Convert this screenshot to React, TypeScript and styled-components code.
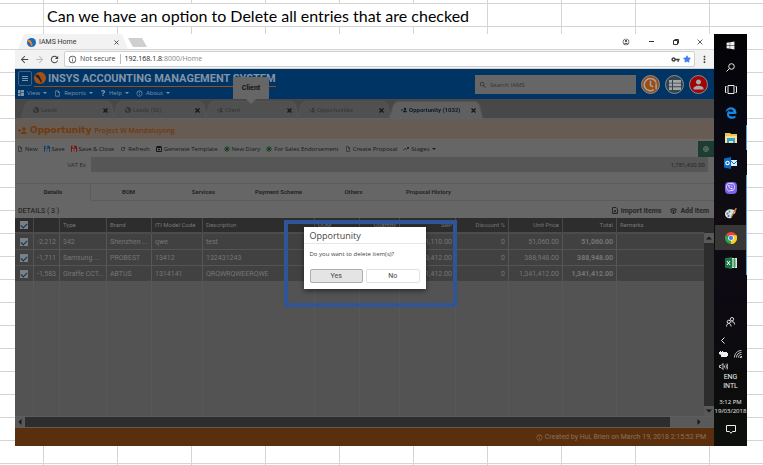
import React from "react";
import styled, { createGlobalStyle, css } from "styled-components";
import { FaWindows, FaViber, FaStar, FaQuestion } from "react-icons/fa";
import { FaEdgeLegacy } from "react-icons/fa6";
import {
  MdArrowBack,
  MdArrowForward,
  MdRefresh,
  MdInfoOutline,
  MdMoreVert,
  MdVpnKey,
  MdPerson,
  MdOutlineInsertDriveFile,
  MdOutlineAccountCircle,
  MdSearch,
} from "react-icons/md";

const ui = `"Open Sans", "Noto Sans", sans-serif`;
const narrow = `Roboto, "Open Sans", sans-serif`;

const GlobalStyle = createGlobalStyle`
  * { box-sizing: border-box; }
  body { margin: 0; font-family: ${ui}; font-size: 7px; line-height: 10px; }
  button, input { font: inherit; color: inherit; }
  button { background: none; border: 0; padding: 0; white-space: nowrap; }
  svg { display: block; flex: none; }
  h1, h2, p { margin: 0; }
`;

/* ---------- worksheet ---------- */

const Sheet = styled.main`
  min-height: 100vh;
  display: flex;
  flex-direction: column;
  background-color: #fff;
  background-image:
    repeating-linear-gradient(to right, transparent 0 73px, #d4d4d4 73px 74px),
    repeating-linear-gradient(to bottom, transparent 0 22px, #d4d4d4 22px 23px);
  background-position: -30px 0, 0 -19px;
  background-size: calc(100% + 30px) 100%, 100% calc(100% + 19px);
`;

const Note = styled.p`
  align-self: flex-start;
  width: 443px;
  height: 22px;
  margin: 4px 0 8px 44px;
  padding-left: 3px;
  background: #fff;
  color: #000;
  font: 16px/23px Lato, "Open Sans", sans-serif;
  white-space: nowrap;
`;

const Desktop = styled.section`
  flex: 1;
  display: flex;
  margin: 0 16px 19px 15px;
`;

/* ---------- browser ---------- */

const Browser = styled.div`
  flex: 1;
  min-width: 0;
  display: flex;
  flex-direction: column;
  background: #fff;
`;

const TitleBar = styled.header`
  display: flex;
  height: 15px;
  padding-left: 3px;
  color: #333;
  font-family: ${narrow};
`;

const BrowserTab = styled.div`
  display: flex;
  align-items: center;
  width: 110px;
  padding: 1px 9px 0 9px;
  gap: 3px;
  background: #f2f2f2;
  clip-path: polygon(0 100%, 6px 0, 104px 0, 100% 100%);
  span { flex: 1; }
`;

const NewTab = styled.button`
  width: 19px;
  height: 9px;
  margin-top: 4px;
  background: #cfcfcf;
  clip-path: polygon(0 0, 14px 0, 100% 100%, 5px 100%);
`;

const WindowButtons = styled.div`
  margin-left: auto;
  display: flex;
  align-items: center;
  gap: 18px;
  padding-right: 11px;
`;

const NavBar = styled.nav`
  display: flex;
  align-items: center;
  height: 20px;
  padding: 0 4px 0 4px;
  gap: 4px;
  background: #f2f2f2;
  border-top: 1px solid #d8d8d8;
  border-bottom: 1px solid #d0d0d0;
  color: #444;
`;

const Address = styled.div`
  flex: 1;
  display: flex;
  align-items: center;
  height: 16px;
  padding: 0 3px;
  gap: 3px;
  background: #fff;
  border: 1px solid #d0d0d0;
  border-radius: 2px;
`;

const Security = styled.span`
  padding-right: 4px;
  border-right: 1px solid #bbb;
  margin-right: 1px;
`;

const Url = styled.span`
  flex: 1;
  color: #888;
  b { font-weight: 400; color: #222; }
`;

/* ---------- application ---------- */

const Page = styled.div`
  position: relative;
  flex: 1;
  display: flex;
  flex-direction: column;
  background: #666;
  color: #262626;
`;

const AppHeader = styled.header`
  display: flex;
  height: 30px;
  padding: 1px 6px 0 3px;
  background: #003465;
  color: #8195a8;
`;

const Branding = styled.div`
  display: flex;
  flex-direction: column;
`;

const BrandRow = styled.div`
  display: flex;
  align-items: center;
  gap: 2px;
  height: 17px;
`;

const MenuButton = styled.button`
  display: grid;
  place-items: center;
  width: 14px;
  height: 15px;
  border: 1px solid #41607d;
  border-radius: 2px;
`;

const Brand = styled.h1`
  display: flex;
  align-items: center;
  height: 17px;
  gap: 2px;
  border-bottom: 1px solid #a04c10;
  font-family: ${narrow};
  font-size: 11px;
  font-weight: 700;
  line-height: 15px;
  white-space: nowrap;
`;

const ToolButton = styled.button`
  display: flex;
  align-items: center;
  gap: 2px;
`;

const MenuRow = styled.nav`
  display: flex;
  align-items: center;
  gap: 7px;
  height: 12px;
  font-size: 6px;
  ${ToolButton} { gap: 3px; }
`;

const Caret = styled.i`
  border: 2px solid transparent;
  border-top-color: currentColor;
  border-bottom: 0;
`;

const HeaderTools = styled.div`
  margin-left: auto;
  display: flex;
  align-items: center;
  gap: 5px;
`;

const SearchBox = styled.label`
  display: flex;
  align-items: center;
  gap: 3px;
  width: 161px;
  height: 19px;
  padding: 0 4px;
  background: #666;
  color: #2c2c2c;
  font-size: 6px;
  input { flex: 1; min-width: 0; background: none; border: 0; padding: 0; }
  input::placeholder { color: #333; opacity: 1; }
`;

const RoundButton = styled.button<{ $fill: string }>`
  display: grid;
  place-items: center;
  width: 19px;
  height: 19px;
  border-radius: 50%;
  border: 1px solid #8c8c8c;
  background: ${(p) => p.$fill};
  color: #a9a9a9;
`;

const TabStrip = styled.div`
  display: flex;
  height: 21px;
  padding: 3px 0 0 7px;
  background: #484848;
  border-bottom: 2px solid #5d5d5d;
`;

const TabShell = styled.div`
  filter: drop-shadow(0 0 1px #6a6a6a);
  width: 92px;
`;

const PageTab = styled.div<{ $active?: boolean }>`
  display: flex;
  align-items: center;
  gap: 2px;
  height: 16px;
  padding: 0 6px 0 11px;
  clip-path: polygon(0 100%, 4px 3px, 7px 0, 86px 0, 89px 3px, 100% 100%);
  background: ${(p) => (p.$active ? "#606060" : "#505050")};
  color: ${(p) => (p.$active ? "#0d1b2a" : "#373737")};
  font-family: ${narrow};
  font-size: 6px;
  font-weight: ${(p) => (p.$active ? 700 : 400)};
  span { flex: 1; white-space: nowrap; }
  svg:last-child { color: #161616; }
`;

const TitleBand = styled.div`
  display: flex;
  align-items: center;
  gap: 3px;
  height: 20px;
  padding: 1px 3px 0;
  background: #665c54;
  border-bottom: 1px solid #6f6760;
  color: #70390d;
  h2 { font-size: 9px; line-height: 14px; font-family: "DejaVu Sans", sans-serif; }
  b { font-size: 7px; font-weight: 600; padding-top: 2px; }
`;

const Actions = styled.div`
  display: flex;
  align-items: center;
  gap: 6px;
  height: 17px;
  padding-left: 2px;
  color: #181818;
  font-size: 6px;
`;

const EyeButton = styled.button`
  display: grid;
  place-items: center;
  width: 16px;
  height: 16px;
  margin-left: auto;
  background: #1d3d33;
  color: #718078;
`;

const Field = styled.label`
  display: flex;
  align-items: center;
  gap: 5px;
  padding-right: 6px;
  font-size: 6px;
  span { width: 71px; text-align: right; }
  input {
    flex: 1;
    min-width: 0;
    height: 15px;
    border: 0;
    padding: 0 3px;
    background: #565656;
    text-align: right;
    font-family: ${narrow};
  }
`;

const SectionTabs = styled.div`
  display: flex;
  height: 18px;
  margin-top: 11px;
  padding-left: 1px;
  border-top: 1px solid #5c5c5c;
  font-family: ${narrow};
`;

const SectionTab = styled.button<{ $active?: boolean }>`
  width: 75px;
  font-size: 6px;
  font-weight: 700;
  border-bottom: 1px solid #5c5c5c;
  ${(p) => p.$active && css`border-bottom-color: #666; border-right: 1px solid #5c5c5c; color: #222;`}
`;

const TabRest = styled.div`
  flex: 1;
  border-bottom: 1px solid #5c5c5c;
`;

const DetailsBar = styled.div`
  display: flex;
  align-items: center;
  gap: 9px;
  height: 17px;
  padding: 2px 5px 0 3px;
  font-family: ${narrow};
  font-weight: 500;
  > :first-child { margin-right: auto; }
`;

const StrongTool = styled(ToolButton)`
  font-weight: 700;
  gap: 3px;
`;

const GridArea = styled.div`
  flex: 1;
  display: grid;
  grid-template-columns: minmax(0, 1fr) 10px;
  background: #535353;
`;

const GridTable = styled.table`
  width: 100%;
  height: 100%;
  table-layout: fixed;
  border-collapse: separate;
  border-spacing: 0;
  color: #767676;
  font-family: ${narrow};
`;

const Cell = styled.td<{ $right?: boolean; $bold?: boolean }>`
  height: 16px;
  padding: 0 3px;
  overflow: hidden;
  white-space: nowrap;
  background: #414141;
  border-right: 1px solid #565656;
  border-bottom: 1px solid #545454;
  text-align: ${(p) => (p.$right ? "right" : "left")};
  font-weight: ${(p) => (p.$bold ? 700 : 400)};
  &:last-child { border-right: 0; }
`;

const HeadCell = styled(Cell)`
  background: #2d2d2d;
  border-right-color: #484848;
  border-bottom: 2px solid #4c4c4c;
  font-size: 6px;
`;

const BlankCell = styled.td`
  border-right: 1px solid #585858;
  &:last-child { border-right: 0; }
`;

const Check = styled.input`
  appearance: none;
  display: grid;
  place-items: center;
  width: 8px;
  height: 8px;
  margin: 0 auto;
  background: #7b8085;
  &:checked::after {
    content: "";
    width: 3px;
    height: 5px;
    border: solid #10304f;
    border-width: 0 1px 1px 0;
    transform: rotate(45deg);
  }
`;

const VScroll = styled.div`
  display: flex;
  flex-direction: column;
  border-top: 15px solid #2d2d2d;
  background: #2d2d2d;
  justify-content: space-between;
`;

const HScroll = styled.div`
  display: flex;
  justify-content: space-between;
  height: 12px;
  background: #2d2d2d;
  border: solid #5d5d5d;
  border-width: 1px 0;
`;

const ScrollEnd = styled.button<{ $wide?: boolean }>`
  display: flex;
  align-items: center;
  justify-content: ${(p) => (p.$wide ? "flex-end" : "center")};
  width: ${(p) => (p.$wide ? "44px" : "10px")};
  padding-right: ${(p) => (p.$wide ? "12px" : "0")};
  height: 10px;
  background: #595959;
  color: #161616;
`;

const StatusBar = styled.footer`
  display: flex;
  align-items: center;
  justify-content: flex-end;
  gap: 2px;
  height: 18px;
  padding-right: 8px;
  background: #5a2f0e;
  color: #8c6f58;
  font-family: ${narrow};
`;

/* ---------- overlays ---------- */

const Tooltip = styled.div`
  position: absolute;
  top: 8px;
  left: 218px;
  width: 36px;
  height: 22px;
  display: grid;
  place-items: center;
  background: #666;
  color: #151515;
  font-family: ${narrow};
  font-weight: 700;
  &::after {
    content: "";
    position: absolute;
    top: 100%;
    left: 13px;
    border: 5px solid transparent;
    border-top-color: #666;
    border-bottom: 0;
  }
`;

const DialogLayer = styled.div`
  position: absolute;
  inset: 0;
  display: grid;
  place-items: center;
`;

const Dialog = styled.div`
  position: relative;
  width: 122px;
  padding-bottom: 6px;
  background: #fff;
  color: #444;
  font-family: ${narrow};
  box-shadow: 0 2px 5px rgba(0, 0, 0, 0.5);
  h2 {
    height: 17px;
    padding-left: 6px;
    border-bottom: 1px solid #e6e6e6;
    font-family: ${ui};
    font-size: 9px;
    font-weight: 400;
    line-height: 18px;
  }
  p { padding: 5px 6px 10px; font-size: 6px; font-family: ${ui}; }
`;

const DialogButtons = styled.div`
  display: grid;
  grid-template-columns: 1fr 1fr;
  gap: 3px;
  padding: 0 6px;
`;

const DialogButton = styled.button<{ $primary?: boolean }>`
  height: 14px;
  border: 1px solid ${(p) => (p.$primary ? "#adadad" : "#e2e2e2")};
  border-radius: 2px;
  background: ${(p) => (p.$primary ? "#e4e4e4" : "#fff")};
`;

const Highlight = styled.div`
  position: absolute;
  inset: -7px -31px -18px -20px;
  border: 4px solid #2f5597;
  pointer-events: none;
`;

/* ---------- taskbar ---------- */

const Taskbar = styled.aside`
  display: flex;
  flex-direction: column;
  width: 33px;
  background: linear-gradient(#030305, #080812 20%, #100c12 45%, #0d0912 65%, #0b0c0b 85%, #0d100d);
  color: #eee;
`;

const TaskItem = styled.button<{ $running?: boolean; $active?: boolean; $small?: boolean }>`
  display: grid;
  place-items: center;
  height: ${(p) => (p.$small ? "22px" : "25px")};
  border-left: 1px solid transparent;
  border-right: 1px solid ${(p) => (p.$running ? "#5aa5e6" : "transparent")};
  background: ${(p) => (p.$active ? "#393636" : "none")};
  background-clip: padding-box;
`;

const Tray = styled.div`
  margin-top: auto;
  display: flex;
  flex-direction: column;
  align-items: center;
  padding-bottom: 3px;
  font-family: ${narrow};
  line-height: 9px;
  white-space: nowrap;
`;

const TrayRow = styled.div<{ $h: number; $start?: boolean }>`
  display: flex;
  align-items: center;
  align-self: stretch;
  justify-content: ${(p) => (p.$start ? "flex-start" : "center")};
  gap: 6px;
  padding-left: ${(p) => (p.$start ? "5px" : "0")};
  height: ${(p) => p.$h}px;
`;

const Clock = styled.time`
  display: grid;
  justify-items: center;
  margin-top: 7px;
  font-size: 6px;
  font-family: ${ui};
`;

/* ---------- drawings ---------- */

const Globe = ({ size, dim }: { size: number; dim?: boolean }) => (
  <svg width={size} height={size} viewBox="0 0 16 16">
    <circle cx="8" cy="8" r="8" fill={dim ? "#353535" : "#1769b8"} />
    <path d="M1 4c2-2 4-1 6 1l2 4c1 2 1 4 0 6-3-1-2-4-4-6S1 7 1 4z" fill={dim ? "#505050" : "#e98330"} />
  </svg>
);

const BrandMark = () => (
  <svg width="12" height="12" viewBox="0 0 16 16">
    <circle cx="8" cy="8" r="8" fill="#a9500f" />
    <path d="M2 4c1-1 3-1 5 1l2 4c1 2 2 3 1 5-2 0-2-3-4-5S2 7 2 4z" fill="#13283d" />
  </svg>
);

const PersonAdd = ({ size }: { size: number }) => (
  <svg width={size} height={size} viewBox="0 0 18 16" fill="currentColor">
    <circle cx="12" cy="5" r="3.600" />
    <path d="M5.500 15c0-7 12.500-7 12.500 0zM0 7h6v2H0zM2 5h2v6H2z" />
  </svg>
);

const Cross = ({ size = 5, w = 1.5 }: { size?: number; w?: number }) => (
  <svg width={size} height={size} viewBox="0 0 6 6" stroke="currentColor" strokeWidth={w}>
    <path d="M.6.6l4.8 4.8M5.400.6L.6 5.400" />
  </svg>
);

const Arrow = ({ d }: { d: string }) => (
  <svg width="6" height="6" viewBox="0 0 6 6" fill="currentColor"><path d={d} /></svg>
);

const Asterisk = () => (
  <svg width="6" height="6" viewBox="0 0 8 8" stroke="#0c3f1b" strokeWidth="1.200">
    <path d="M4 0v8M0 4h8M1.200 1.200l5.600 5.600M6.800 1.200L1.200 6.800" />
  </svg>
);

const Disk = ({ c }: { c: string }) => (
  <svg width="6" height="7" viewBox="0 0 12 13">
    <path d="M0 1h10l2 2v10H0z" fill={c} />
    <path d="M3 1h5v4H3zM2 7h8v6H2z" fill="#777" />
    <path d="M6 2h1v2H6zM3.500 9h5M3.500 11h5" stroke={c} />
  </svg>
);

const Box = () => (
  <svg width="6" height="6" viewBox="0 0 12 12" fill="none" stroke="currentColor" strokeWidth="2">
    <path d="M1 3h10v8H1zM1 1h10" /><path d="M4 7h4M6 5v4" />
  </svg>
);

const Trend = () => (
  <svg width="6" height="6" viewBox="0 0 12 12" fill="none" stroke="currentColor" strokeWidth="1.500">
    <path d="M0 9l4-4 3 2 4-4M8 3h3v3" />
  </svg>
);

const ImportMark = () => (
  <svg width="6" height="7" viewBox="0 0 12 14" fill="none" stroke="currentColor" strokeWidth="2">
    <path d="M1 1h7l3 3v9H1zM4 6l4 5M8 6l-4 5" />
  </svg>
);

const AddMark = () => (
  <svg width="7" height="6" viewBox="0 0 14 12" fill="none" stroke="currentColor" strokeWidth="2">
    <path d="M1 3l6-2 6 2-6 2zM2 5l1 4 4 2 4-2 1-4M7 5v6" />
  </svg>
);

const Tiles = () => (
  <svg width="6" height="6" viewBox="0 0 12 12" fill="currentColor">
    <path d="M0 0h5v7H0zM6 0h6v4H6zM0 8h5v4H0zM6 5h6v7H6z" />
  </svg>
);

const ClockMark = () => (
  <svg width="15" height="15" viewBox="0 0 16 16" fill="none" stroke="#a9a29c" strokeWidth="1.600">
    <path d="M11.500 13.500A6.500 6.500 0 1 1 14 6M8 4v5l3 1.500M14 7v6" />
  </svg>
);

const ListMark = () => (
  <svg width="12" height="10" viewBox="0 0 12 10" fill="#a5a5a5">
    <path d="M0 0h3v2.700H0zM4 0h8v2.700H4zM0 3.600h3v2.700H0zM4 3.600h8v2.700H4zM0 7.200h3V10H0zM4 7.200h8V10H4z" />
  </svg>
);

const TaskView = () => (
  <svg width="12" height="9" viewBox="0 0 12 9" fill="none" stroke="currentColor">
    <path d="M3 .5h6v8H3zM1.500 1.500h-1v6h1M10.500 1.500h1v6h-1" />
  </svg>
);

const Folder = () => (
  <svg width="12" height="10" viewBox="0 0 12 10">
    <path d="M0 0h5l1 1h6v9H0z" fill="#e9c35a" />
    <path d="M0 3h12v7H0z" fill="#fbe08b" />
    <path d="M2 5h8v5H8V8H4v2H2z" fill="#2ea3e0" />
  </svg>
);

const Outlook = () => (
  <svg width="13" height="12" viewBox="0 0 13 12">
    <path d="M6 3h7v6H6z" fill="#dcecf9" />
    <path d="M7 4l3 3 3-3" fill="none" stroke="#0f6fc4" />
    <path d="M0 1.500L7 0v12L0 10.500z" fill="#0a6cc4" />
    <circle cx="3.500" cy="6" r="1.700" fill="none" stroke="#fff" strokeWidth="1.100" />
  </svg>
);

const ViberBadge = styled.span`
  display: grid;
  place-items: center;
  width: 12px;
  height: 12px;
  border-radius: 4px;
  background: #7d62e8;
  color: #f3f0ff;
`;

const Palette = () => (
  <svg width="13" height="12" viewBox="0 0 13 12">
    <path d="M1 7c0-4 5-6 9-4 3 2 1 4-1 4-2 1 0 3-2 4-3 1-6-1-6-4z" fill="#cfe2ef" />
    <circle cx="3.500" cy="6.500" r="1" fill="#d8442f" />
    <circle cx="5.500" cy="4.500" r="1" fill="#3e9f44" />
    <circle cx="4.500" cy="9" r="1" fill="#2767c8" />
    <path d="M6.500 10l5-9 1.500.5L8 10z" fill="#e0812f" />
  </svg>
);

const Chrome = () => (
  <svg width="12" height="12" viewBox="0 0 24 24">
    <path d="M12 12L1.600 6A12 12 0 0 1 22.400 6z" fill="#e8453c" />
    <path d="M12 12l10.400-6A12 12 0 0 1 12 24z" fill="#fbcb20" />
    <path d="M12 12v12A12 12 0 0 1 1.600 6z" fill="#2fa24c" />
    <path d="M12 6.500h10.600A12 12 0 0 1 12 24l5-9z" fill="#fbcb20" />
    <circle cx="12" cy="12" r="5.600" fill="#fff" />
    <circle cx="12" cy="12" r="4.300" fill="#4484ec" />
  </svg>
);

const Excel = () => (
  <svg width="12" height="12" viewBox="0 0 12 12">
    <path d="M6 1h6v10H6z" fill="#d6ebdd" />
    <path d="M7 3h4M7 5h4M7 7h4M7 9h4M9.500 1v10" stroke="#2b8552" strokeWidth=".8" />
    <path d="M0 1.200L7 0v12L0 10.800z" fill="#1d7444" />
    <path d="M2 4l3 4M5 4L2 8" stroke="#fff" />
  </svg>
);

const People = () => (
  <svg width="9" height="10" viewBox="0 0 9 10" fill="none" stroke="currentColor" strokeWidth=".9">
    <circle cx="6" cy="2.200" r="1.700" /><circle cx="2.800" cy="4.800" r="1.600" />
    <path d="M.5 9.500c0-4 4.500-4 4.600 0M5.500 5c2-.8 3 .3 3 2.500" />
  </svg>
);

const Chevron = () => (
  <svg width="8" height="7" viewBox="0 0 8 7" fill="none" stroke="currentColor"><path d="M5.500.5l-3 3 3 3" /></svg>
);

const Battery = () => (
  <svg width="9" height="7" viewBox="0 0 9 7" fill="currentColor">
    <path d="M1 0h1v1h1V0h1v1h4v1h1v3H8v1H2V4L0 3V1h1z" />
  </svg>
);

const Wifi = () => (
  <svg width="8" height="8" viewBox="0 0 8 8" fill="none" stroke="currentColor" strokeWidth=".8">
    <path d="M.5 7.500c0-4 3-7 7-7M2.500 7.500c0-3 2-5 5-5M4.500 7.500c0-2 1-3 3-3" /><path d="M6 7.500h1.500V6z" />
  </svg>
);

const Speaker = () => (
  <svg width="9" height="7" viewBox="0 0 9 7" fill="none" stroke="currentColor" strokeWidth=".8">
    <path d="M.5 2.500h1.500l2-2v6l-2-2H.5zM5.500 2.500v2M6.800 1.500c.8 1 .8 3 0 4M8 .5c1 1.500 1 4.500 0 6" />
  </svg>
);

const Notice = () => (
  <svg width="10" height="9" viewBox="0 0 10 9" fill="none" stroke="currentColor">
    <path d="M.5.5h9v6H6.500L5 8.300 3.500 6.500h-3z" />
  </svg>
);

const SearchGlass = () => (
  <svg width="9" height="9" viewBox="0 0 9 9" fill="none" stroke="currentColor">
    <circle cx="5.500" cy="3.500" r="2.800" /><path d="M3.500 5.500L.5 8.500" />
  </svg>
);

const Restore = () => (
  <svg width="6" height="6" viewBox="0 0 6 6" fill="none" stroke="currentColor"><path d="M.5 1.500h4v4h-4zM1.500.5h4v4" /></svg>
);

/* ---------- data ---------- */

const pageTabs = ["Leads", "Leads (56)", "Client", "Opportunities", "Opportunity (1032)"];
const sections = ["Details", "BOM", "Services", "Payment Scheme", "Others", "Proposal History"];

const columns: { label: string; width?: number; right?: boolean; bold?: boolean }[] = [
  { label: "", width: 26, right: true },
  { label: "Type", width: 47 },
  { label: "Brand", width: 45 },
  { label: "ITI Model Code", width: 51 },
  { label: "Description", width: 112 },
  { label: "UOM", width: 45 },
  { label: "Quantity", width: 40, right: true },
  { label: "SRP", width: 56, right: true },
  { label: "Discount %", width: 53, right: true },
  { label: "Unit Price", width: 54, right: true },
  { label: "Total", width: 54, right: true, bold: true },
  { label: "Remarks" },
];

const rows = [
  ["-2,212", "342", "Shenzhen ...", "qwe", "test", "", "", "51,110.00", "0", "51,060.00", "51,060.00", ""],
  ["-1,711", "Samsung ...", "PROBEST", "13412", "132431243", "", "", "413,412.00", "0", "388,948.00", "388,948.00", ""],
  ["-1,583", "Giraffe CCT...", "ABTUS", "1314141", "QRQWRQWEERQWE", "", "", "1,341,412.00", "0", "1,341,412.00", "1,341,412.00", ""],
];

export default function App() {
  return (
    <>
      <GlobalStyle />
      <Sheet>
        <Note>Can we have an option to Delete all entries that are checked</Note>
        <Desktop>
          <Browser>
            <TitleBar>
              <BrowserTab>
                <Globe size={9} />
                <span>IAMS Home</span>
                <Cross w={1} />
              </BrowserTab>
              <NewTab aria-label="New tab" />
              <WindowButtons>
                <MdOutlineAccountCircle size={8} />
                <svg width="7" height="5" viewBox="0 0 7 5"><path d="M1 2.500h5" stroke="#333" /></svg>
                <Restore />
                <Cross size={6} w={0.8} />
              </WindowButtons>
            </TitleBar>
            <NavBar>
              <MdArrowBack size={11} />
              <MdArrowForward size={11} color="#bbb" />
              <MdRefresh size={11} />
              <Address>
                <MdInfoOutline size={9} />
                <Security>Not secure</Security>
                <Url><b>192.168.1.8</b>:8000/Home</Url>
                <MdVpnKey size={9} />
                <FaStar size={8} color="#3f7ff0" />
              </Address>
              <MdMoreVert size={11} />
            </NavBar>

            <Page>
              <AppHeader>
                <Branding>
                  <BrandRow>
                    <MenuButton aria-label="Menu">
                      <svg width="6" height="5" viewBox="0 0 6 5" stroke="currentColor"><path d="M0 .5h6M0 2.500h6M0 4.500h6" /></svg>
                    </MenuButton>
                    <Brand><BrandMark />INSYS ACCOUNTING MANAGEMENT SYSTEM</Brand>
                  </BrandRow>
                  <MenuRow>
                    <ToolButton><Tiles />View<Caret /></ToolButton>
                    <ToolButton><MdOutlineInsertDriveFile size={7} />Reports<Caret /></ToolButton>
                    <ToolButton><FaQuestion size={6} />Help<Caret /></ToolButton>
                    <ToolButton><MdInfoOutline size={7} />About<Caret /></ToolButton>
                  </MenuRow>
                </Branding>
                <HeaderTools>
                  <SearchBox>
                    <MdSearch size={8} />
                    <input aria-label="Search" placeholder="Search IAMS" />
                  </SearchBox>
                  <RoundButton $fill="#9a4d19" aria-label="History"><ClockMark /></RoundButton>
                  <RoundButton $fill="#2f4550" aria-label="Lists"><ListMark /></RoundButton>
                  <RoundButton $fill="#a00508" aria-label="Account"><MdPerson size={15} /></RoundButton>
                </HeaderTools>
              </AppHeader>

              <TabStrip>
                {pageTabs.map((t, i) => (
                  <TabShell key={t}>
                    <PageTab $active={i === 4}>
                      {i < 2 ? <Globe size={6} dim /> : <PersonAdd size={6} />}
                      <span>{t}</span>
                      <Cross size={5} w={1.5} />
                    </PageTab>
                  </TabShell>
                ))}
              </TabStrip>

              <TitleBand>
                <PersonAdd size={9} />
                <h2>Opportunity</h2>
                <b>Project W Mandaluyong</b>
              </TitleBand>

              <Actions>
                <ToolButton><MdOutlineInsertDriveFile size={6} />New</ToolButton>
                <ToolButton><Disk c="#153c5e" />Save</ToolButton>
                <ToolButton><Disk c="#741015" />Save &amp; Close</ToolButton>
                <ToolButton><MdRefresh size={6} />Refresh</ToolButton>
                <ToolButton><Box />Generate Template</ToolButton>
                <ToolButton><Asterisk />New Diary</ToolButton>
                <ToolButton><Asterisk />For Sales Endorsement</ToolButton>
                <ToolButton><MdOutlineInsertDriveFile size={6} />Create Proposal</ToolButton>
                <ToolButton><Trend />Stages<Caret /></ToolButton>
                <EyeButton aria-label="Preview">
                  <svg width="6" height="6" viewBox="0 0 6 6" fill="none" stroke="currentColor" strokeWidth=".8"><circle cx="3" cy="3" r="2.500" /><path d="M1 3h4M3 1v4" /></svg>
                </EyeButton>
              </Actions>

              <Field><span>VAT Ex</span><input defaultValue="1,781,420.00" /></Field>

              <SectionTabs>
                {sections.map((s, i) => <SectionTab key={s} $active={i === 0}>{s}</SectionTab>)}
                <TabRest />
              </SectionTabs>

              <DetailsBar>
                <span>DETAILS ( 3 )</span>
                <StrongTool><ImportMark />Import Items</StrongTool>
                <StrongTool><AddMark />Add Item</StrongTool>
              </DetailsBar>

              <GridArea>
                <GridTable>
                  <colgroup>
                    <col width={19} />
                    {columns.map((c) => <col key={c.label} width={c.width} />)}
                  </colgroup>
                  <thead>
                    <tr>
                      <HeadCell as="th"><Check type="checkbox" defaultChecked aria-label="Select all" /></HeadCell>
                      {columns.map((c) => <HeadCell as="th" key={c.label} $right={c.right}>{c.label}</HeadCell>)}
                    </tr>
                  </thead>
                  <tbody>
                    {rows.map((r) => (
                      <tr key={r[0]}>
                        <Cell><Check type="checkbox" defaultChecked aria-label={`Select ${r[0]}`} /></Cell>
                        {r.map((v, i) => (
                          <Cell key={i} $right={columns[i].right} $bold={columns[i].bold}>{v}</Cell>
                        ))}
                      </tr>
                    ))}
                    <tr>
                      <BlankCell />
                      {columns.map((c) => <BlankCell key={c.label} />)}
                    </tr>
                  </tbody>
                </GridTable>
                <VScroll>
                  <ScrollEnd aria-label="Scroll up"><Arrow d="M0 4.500l3-3 3 3z" /></ScrollEnd>
                  <ScrollEnd aria-label="Scroll down"><Arrow d="M0 1.500l3 3 3-3z" /></ScrollEnd>
                </VScroll>
              </GridArea>
              <HScroll>
                <ScrollEnd aria-label="Scroll left"><Arrow d="M4.500 0l-3 3 3 3z" /></ScrollEnd>
                <ScrollEnd $wide aria-label="Scroll right"><Arrow d="M1.500 0l3 3-3 3z" /></ScrollEnd>
              </HScroll>
              <StatusBar><MdInfoOutline size={7} />Created by Hui, Brien on March 19, 2018 2:15:52 PM</StatusBar>

              <Tooltip role="tooltip">Client</Tooltip>
              <DialogLayer>
                <Dialog role="dialog" aria-labelledby="dialog-title">
                  <h2 id="dialog-title">Opportunity</h2>
                  <p>Do you want to delete item(s)?</p>
                  <DialogButtons>
                    <DialogButton $primary>Yes</DialogButton>
                    <DialogButton>No</DialogButton>
                  </DialogButtons>
                  <Highlight />
                </Dialog>
              </DialogLayer>
            </Page>
          </Browser>

          <Taskbar>
            <TaskItem $small aria-label="Start"><FaWindows size={9} /></TaskItem>
            <TaskItem $small aria-label="Search"><SearchGlass /></TaskItem>
            <TaskItem $small aria-label="Task view"><TaskView /></TaskItem>
            <TaskItem aria-label="Edge"><FaEdgeLegacy size={12} color="#1686e0" /></TaskItem>
            <TaskItem $running aria-label="Explorer"><Folder /></TaskItem>
            <TaskItem aria-label="Outlook"><Outlook /></TaskItem>
            <TaskItem $running aria-label="Viber"><ViberBadge><FaViber size={9} /></ViberBadge></TaskItem>
            <TaskItem $running aria-label="Paint"><Palette /></TaskItem>
            <TaskItem $running $active aria-label="Chrome"><Chrome /></TaskItem>
            <TaskItem $running aria-label="Excel"><Excel /></TaskItem>
            <Tray>
              <TrayRow $h={20}><People /></TrayRow>
              <TrayRow $h={16} $start><Chevron /></TrayRow>
              <TrayRow $h={12} $start><Battery /><Wifi /></TrayRow>
              <TrayRow $h={13} $start><Speaker /></TrayRow>
              <span>ENG</span>
              <span>INTL</span>
              <Clock><span>3:12 PM</span><span>19/03/2018</span></Clock>
              <TrayRow $h={27}><Notice /></TrayRow>
            </Tray>
          </Taskbar>
        </Desktop>
      </Sheet>
    </>
  );
}
